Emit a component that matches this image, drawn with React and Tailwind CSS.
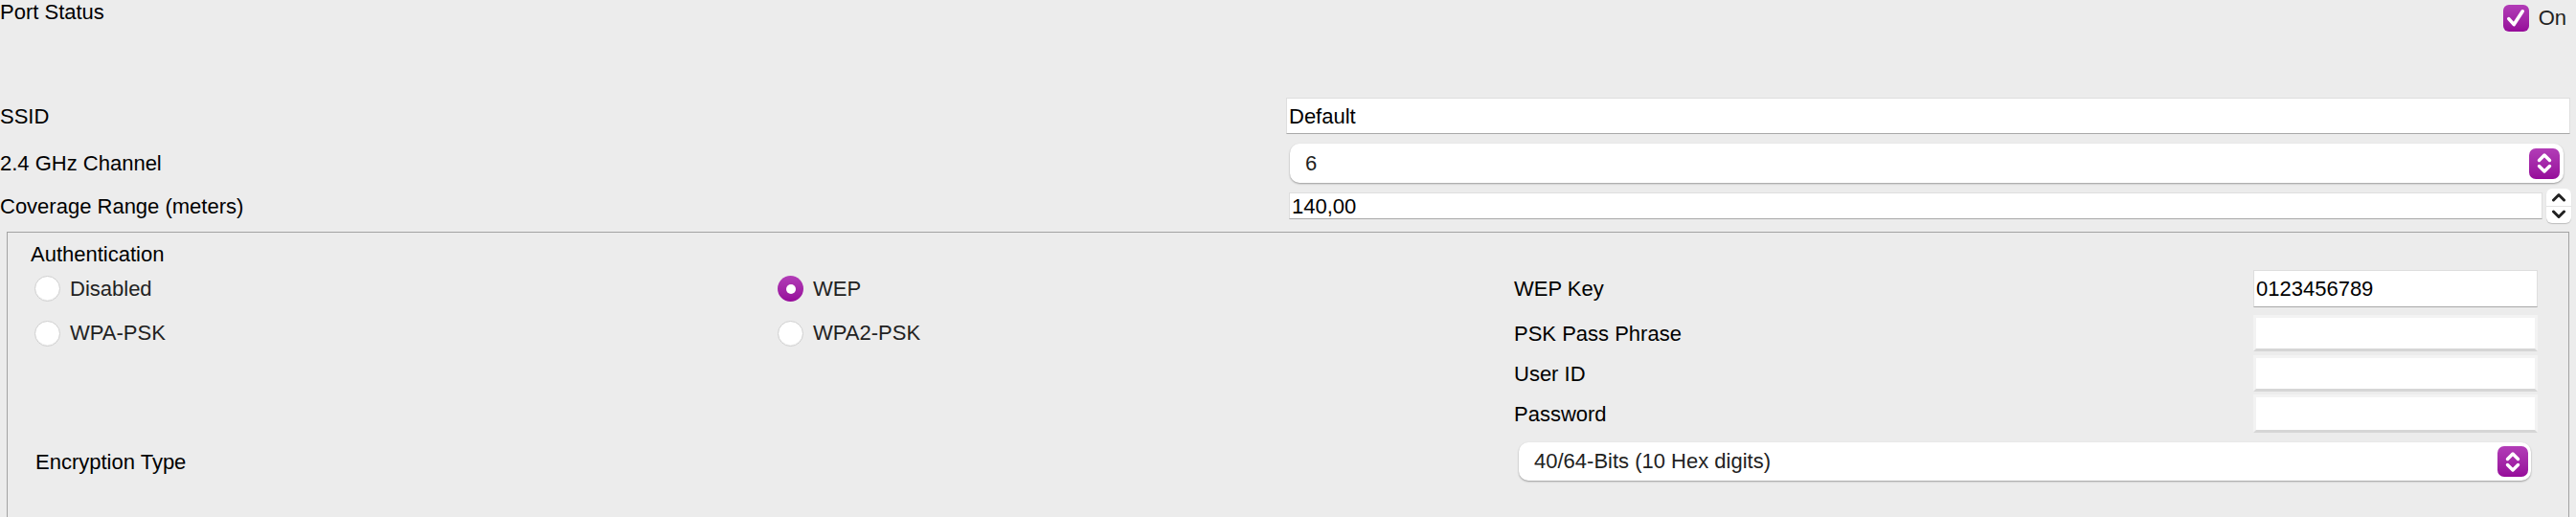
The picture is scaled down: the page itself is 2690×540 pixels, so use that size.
import { useState } from "react";

const font = { fontFamily: '"Liberation Sans", Arial, Helvetica, sans-serif' };

function Chevrons({ className = "", strokeWidth = 3 }) {
  return (
    <svg viewBox="0 0 20 26" className={className} fill="none" stroke="currentColor" strokeWidth={strokeWidth} strokeLinecap="round" strokeLinejoin="round">
      <polyline points="4.5,10 10,4.5 15.5,10" />
      <polyline points="4.5,16 10,21.5 15.5,16" />
    </svg>
  );
}

function PurpleSelect({ value, className = "" }) {
  return (
    <div className={`flex items-center justify-between bg-white rounded-[10px] shadow-[0_1px_2px_rgba(0,0,0,0.35)] ${className}`}>
      <span className="text-[22px] text-[#222] leading-none">{value}</span>
      <div className="w-[32px] h-[32px] rounded-[7px] bg-gradient-to-b from-[#b23cb7] to-[#960a9a] flex items-center justify-center text-white">
        <Chevrons className="w-[20px] h-[27px]" strokeWidth={3.4} />
      </div>
    </div>
  );
}

function Radio({ checked, label }) {
  return (
    <div className="flex items-center h-full ml-[4px]">
      {checked ? (
        <div className="w-[27px] h-[27px] rounded-full bg-gradient-to-b from-[#b23cb7] to-[#960a9a] flex items-center justify-center">
          <div className="w-[10px] h-[10px] rounded-full bg-white" />
        </div>
      ) : (
        <div className="w-[27px] h-[27px] rounded-full bg-white border border-[#cfcfcf] shadow-[inset_0_-1px_1px_rgba(0,0,0,0.06)]" />
      )}
      <span className="ml-[10px] text-[22px] text-[#222] leading-none">{label}</span>
    </div>
  );
}

function Field({ value = "", filled }) {
  return (
    <div
      className={`h-full bg-white flex items-center pl-[2px] text-[22px] text-black ${
        filled ? "border border-[#dedede] border-b-[#a9a9a9]" : "border-[3px] border-[#f3f3f3] border-b-[#d6d6d6]"
      }`}
    >
      {value}
    </div>
  );
}

export default function App() {
  const [on] = useState(true);

  return (
    <div className="w-[2690px] h-[540px] overflow-hidden bg-[#ececec] text-black" style={font}>
      {/* Port status */}
      <div className="flex items-start justify-between h-[32px]">
        <span className="text-[22px] leading-[25px]">Port Status</span>
        <div className="flex items-center mt-[2px] mr-[10px]">
          <div className="w-[27px] h-[28px] rounded-[6px] bg-gradient-to-b from-[#b23cb7] to-[#960a9a] flex items-center justify-center">
            {on && (
              <svg viewBox="0 0 20 20" className="w-[24px] h-[24px]" fill="none" stroke="white" strokeWidth="3" strokeLinecap="round" strokeLinejoin="round">
                <polyline points="4,10.5 8.5,15.5 16,4" />
              </svg>
            )}
          </div>
          <span className="ml-[10px] text-[22px] text-[#222]">On</span>
        </div>
      </div>

      {/* SSID */}
      <div className="grid grid-cols-[1343px_1fr] items-center h-[38px] mt-[70px]">
        <span className="text-[22px]">SSID</span>
        <div className="h-[38px] mr-[6px]">
          <Field value="Default" filled />
        </div>
      </div>

      {/* Channel */}
      <div className="grid grid-cols-[1343px_1fr] items-center h-[41px] mt-[10px]">
        <span className="text-[22px]">2.4 GHz Channel</span>
        <PurpleSelect value="6" className="h-[41px] ml-[4px] mr-[13px] pl-[16px] pr-[4px]" />
      </div>

      {/* Coverage */}
      <div className="grid grid-cols-[1343px_1fr] items-center h-[36px] mt-[6px]">
        <span className="text-[22px]">Coverage Range (meters)</span>
        <div className="flex items-center ml-[3px] mr-[5px]">
          <div className="flex-1 h-[28px]">
            <Field value="140,00" filled />
          </div>
          <div className="ml-[4px] w-[26px] h-[36px] bg-white rounded-[6px] shadow-[0_1px_1px_rgba(0,0,0,0.2)] flex flex-col text-[#222]">
            <div className="flex-1 flex items-center justify-center border-b border-[#e4e4e4]">
              <svg viewBox="0 0 16 10" className="w-[16px] h-[10px]" fill="none" stroke="currentColor" strokeWidth="3" strokeLinecap="round" strokeLinejoin="round">
                <polyline points="2.5,8 8,2.5 13.5,8" />
              </svg>
            </div>
            <div className="flex-1 flex items-center justify-center">
              <svg viewBox="0 0 16 10" className="w-[16px] h-[10px]" fill="none" stroke="currentColor" strokeWidth="3" strokeLinecap="round" strokeLinejoin="round">
                <polyline points="2.5,2 8,7.5 13.5,2" />
              </svg>
            </div>
          </div>
        </div>
      </div>

      {/* Authentication */}
      <div className="mt-[9px] ml-[7px] mr-[7px] border border-[#a3a3a3] pb-[60px]">
        <div className="pl-[24px] pt-[10px] text-[22px] leading-[25px]">Authentication</div>

        <div className="grid grid-cols-[776px_773px_772px_297px] pl-[24px] mt-[4px]">
          {/* row 1 */}
          <div className="h-[39px]"><Radio label="Disabled" /></div>
          <div className="h-[39px]"><Radio checked label="WEP" /></div>
          <div className="h-[39px] flex items-center text-[22px]">WEP Key</div>
          <div className="h-[39px]"><Field value="0123456789" filled /></div>

          {/* row 2 */}
          <div className="h-[38px] mt-[8px]"><Radio label="WPA-PSK" /></div>
          <div className="h-[38px] mt-[8px]"><Radio label="WPA2-PSK" /></div>
          <div className="h-[38px] mt-[8px] flex items-center text-[22px]">PSK Pass Phrase</div>
          <div className="h-[38px] mt-[8px]"><Field /></div>

          {/* row 3 */}
          <div className="h-[38px] mt-[4px] col-span-2" />
          <div className="h-[38px] mt-[4px] flex items-center text-[22px]">User ID</div>
          <div className="h-[38px] mt-[4px]"><Field /></div>

          {/* row 4 */}
          <div className="h-[40px] mt-[3px] col-span-2" />
          <div className="h-[40px] mt-[3px] flex items-center text-[22px]">Password</div>
          <div className="h-[40px] mt-[3px]"><Field /></div>

          {/* encryption */}
          <div className="h-[40px] mt-[10px] col-span-2 flex items-center pl-[5px] text-[22px]">Encryption Type</div>
          <div className="h-[40px] mt-[10px] col-span-2 ml-[5px] mr-[7px]">
            <PurpleSelect value="40/64-Bits (10 Hex digits)" className="h-[40px] pl-[16px] pr-[3px]" />
          </div>
        </div>
      </div>
    </div>
  );
}
